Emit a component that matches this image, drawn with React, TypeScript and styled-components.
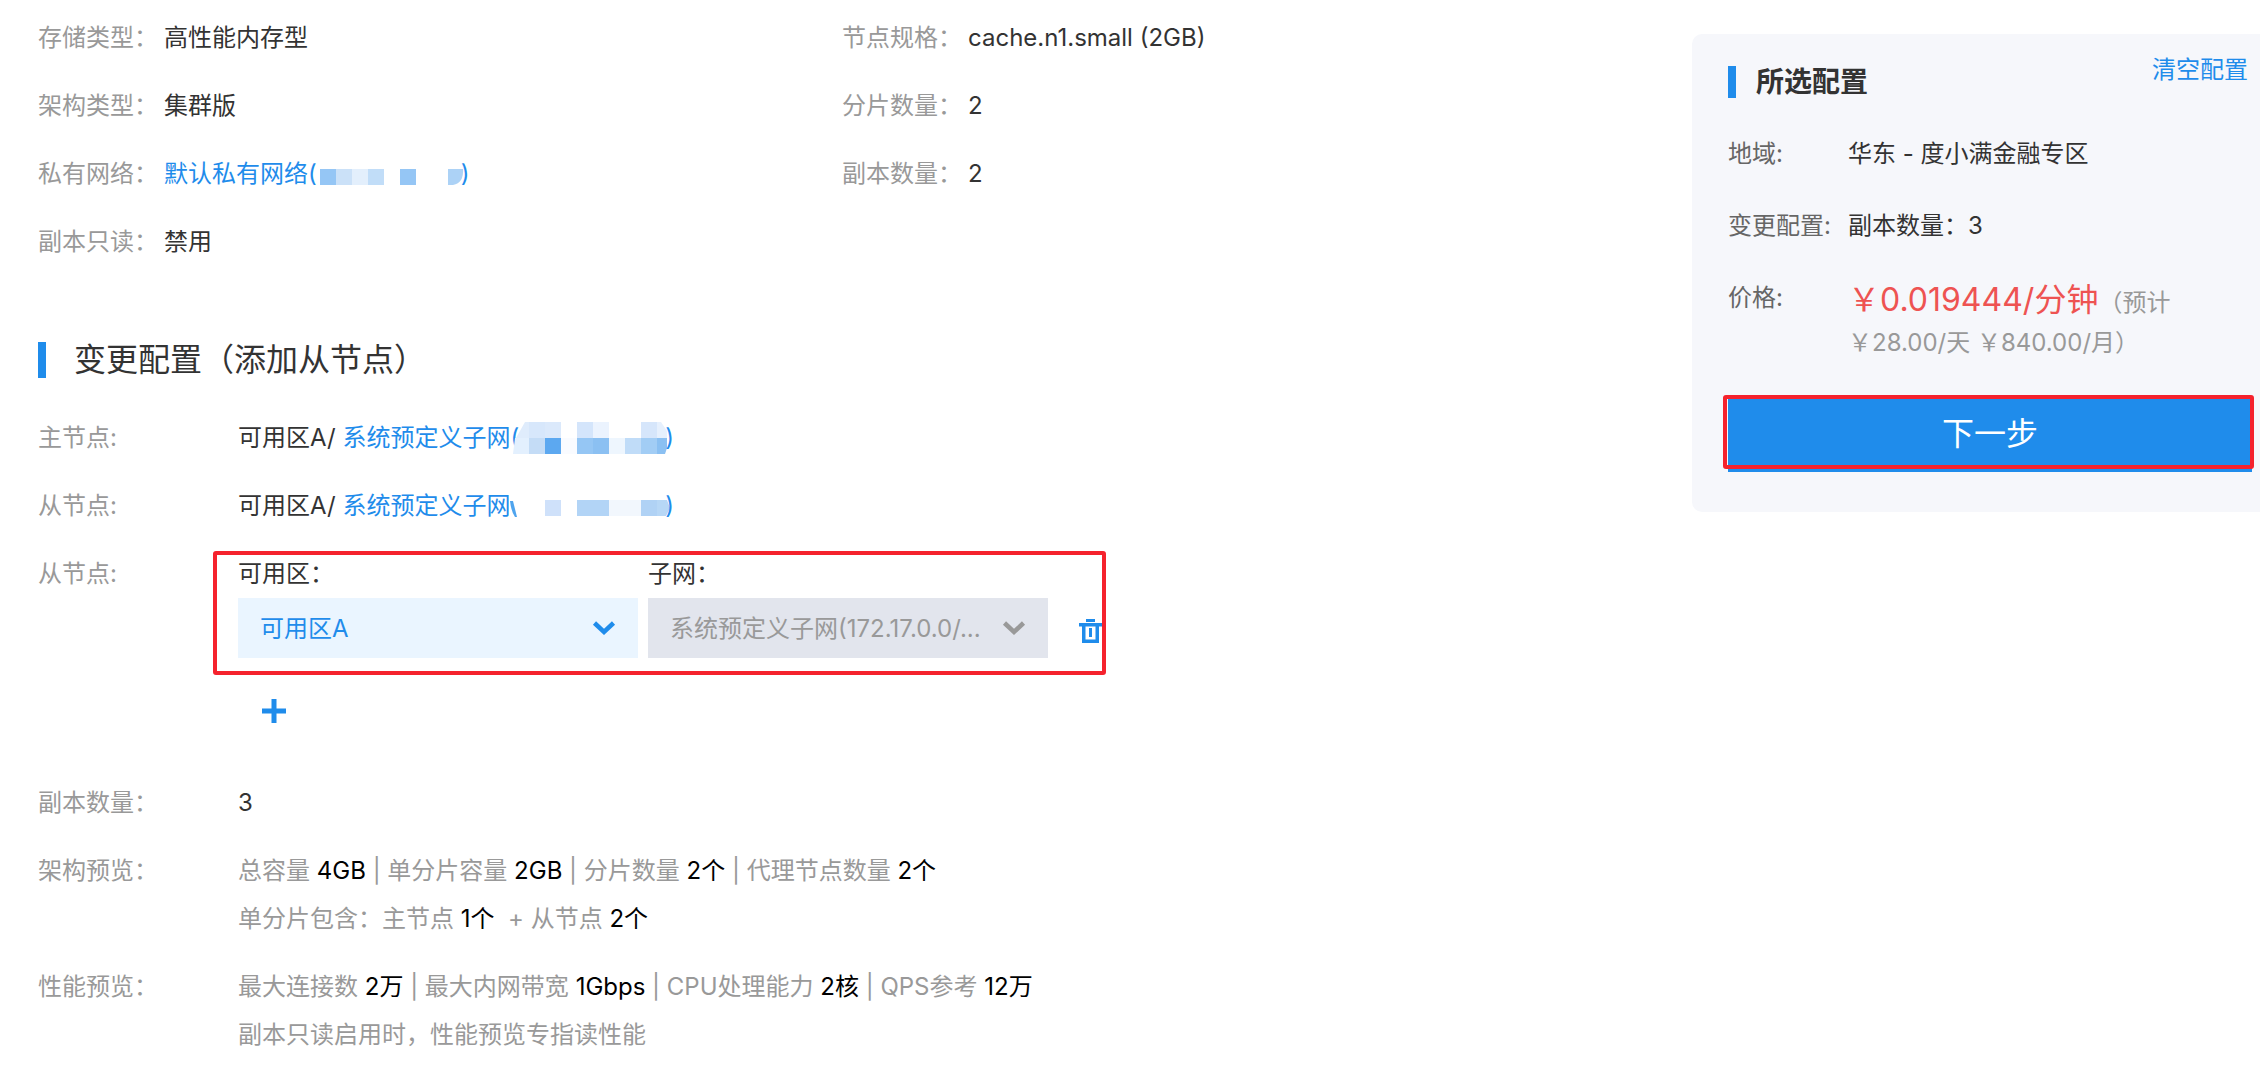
import React from "react";
import styled, { createGlobalStyle } from "styled-components";

const BLUE = "#1f8ceb";

const Global = createGlobalStyle`
  * { box-sizing: border-box; }
  body {
    margin: 0;
    background: #fff;
    color: #333;
    font-family: Inter, "Noto Sans CJK SC", sans-serif;
    font-size: 24px;
    line-height: 36px;
  }
  dl, dd, h2, h3, p { margin: 0; }
  button, select { font: inherit; }
`;

const Page = styled.div`
  display: grid;
  grid-template-columns: minmax(0, 1fr) 568px;
  align-items: start;
`;

const Main = styled.main`
  padding: 20px 0 36px 38px;
`;

const Summary = styled.dl`
  display: grid;
  grid-template-columns: 804px 1fr;
  row-gap: 32px;
`;

const SummaryItem = styled.div<{ $column: number }>`
  display: flex;
  grid-column: ${(p) => p.$column};
  gap: 6px;
`;

const Term = styled.dt`
  color: #999;
`;

const Link = styled.a`
  color: ${BLUE};
  text-decoration: none;
`;

const SectionTitle = styled.h2`
  display: flex;
  align-items: center;
  gap: 28px;
  margin: 80px 0 40px;
  font-size: 32px;
  font-weight: 400;
  line-height: 40px;

  &::before {
    content: "";
    width: 8px;
    height: 36px;
    background: ${BLUE};
  }
`;

const Fields = styled.dl`
  display: grid;
  row-gap: 32px;
`;

const Field = styled.div`
  display: grid;
  grid-template-columns: 200px 1fr;
`;

const NodeEditor = styled.div`
  position: relative;
  display: flex;
  align-items: flex-end;
  width: max-content;
  gap: 10px;
`;

const Picker = styled.div`
  display: flex;
  flex-direction: column;
  width: 400px;
  gap: 6px;
`;

const SelectBox = styled.div`
  display: grid;
  align-items: center;

  > * { grid-area: 1 / 1; }
  > svg { justify-self: end; margin-right: 22px; pointer-events: none; }
`;

const Select = styled.select`
  appearance: none;
  width: 100%;
  height: 60px;
  padding: 2px 64px 0 22px;
  border: 0;
  border-radius: 0;
  background: #eaf5ff;
  color: ${BLUE};
  text-overflow: ellipsis;
  opacity: 1;

  &:disabled {
    background: #e2e5ed;
    color: #999;
  }
`;

const IconButton = styled.button`
  display: flex;
  align-items: center;
  justify-content: center;
  width: 24px;
  height: 60px;
  padding: 0;
  border: 0;
  background: none;
  color: ${BLUE};
`;

const DeleteButton = styled(IconButton)`
  margin-left: 20px;
  padding-top: 6px;
`;

const AddButton = styled(IconButton)`
  margin: 23px 0 12px 24px;
`;

const Highlight = styled.span<{ $inset: string }>`
  position: absolute;
  inset: ${(p) => p.$inset};
  border: 4px solid #f5222d;
  border-radius: 3px;
  pointer-events: none;
`;

const Preview = styled.dd`
  color: #999;

  p + p { margin-top: 12px; }
  b { color: #000; font-weight: 400; }
`;

const Card = styled.aside`
  margin-top: 34px;
  padding: 14px 8px 40px 36px;
  border-radius: 10px 0 0 10px;
  background: #f6f7fb;
`;

const CardHead = styled.header`
  display: flex;
  align-items: flex-start;
  justify-content: space-between;
  padding-right: 4px;
`;

const CardTitle = styled.h3`
  display: flex;
  align-items: center;
  gap: 20px;
  padding-top: 16px;
  font-size: 28px;
  font-weight: 700;
  line-height: 36px;

  &::before {
    content: "";
    width: 8px;
    height: 32px;
    background: ${BLUE};
  }
`;

const ClearButton = styled.button`
  padding: 4px 0 0;
  border: 0;
  background: none;
  color: ${BLUE};
`;

const CardFields = styled.dl`
  display: grid;
  row-gap: 36px;
  margin: 36px 0 33px;
`;

const CardField = styled.div`
  display: grid;
  grid-template-columns: 120px 1fr;

  dt { color: #666; }
`;

const Price = styled.dd`
  color: #999;
  line-height: 40px;

  strong { color: #ee5352; font-size: 32px; font-weight: 400; }
  span { white-space: nowrap; }
`;

const Action = styled.div`
  position: relative;
`;

const NextButton = styled.button`
  display: block;
  width: 100%;
  height: 76px;
  border: 0;
  background: ${BLUE};
  color: #fff;
  font-size: 32px;
`;

const MaskSvg = styled.svg`
  display: inline-block;
  overflow: visible;
  vertical-align: -8px;
`;

type Shape = [path: string, color: string];

const NETWORK_MASK: Shape[] = [
  ["M3 11h16v16H3z", "#95c6f5"],
  ["M19 11h16v16H19z", "#cbe1f8"],
  ["M35 11h16v16H35z", "#e3effc"],
  ["M51 11h16v16H51z", "#c1ddf8"],
  ["M83 11h16v16H83z", "#95c6f5"],
  ["M131 11h15q1 14-10 16h-5z", "#acd2f6"],
];

const PRIMARY_MASK: Shape[] = [
  ["M6 0h4v16H-3z", "#dfecfc"],
  ["M10 0h16v16H10z", "#d7e7fb"],
  ["M26 0h16v16H26z", "#dbe9fb"],
  ["M58 0h16v16H58z", "#d4e5fb"],
  ["M74 0h16v16H74z", "#ebf3fe"],
  ["M122 0h16v16H122z", "#d6e6fb"],
  ["M138 0h4l6 9v7h-10z", "#e6f0fd"],
  ["M-4 16h14v16H-6z", "#e3f0fe"],
  ["M10 16h16v16H10z", "#c4dcf6"],
  ["M26 16h16v16H26z", "#5ca8f0"],
  ["M42 16h16v16H42z", "#f9fbff"],
  ["M58 16h16v16H58z", "#95c6f4"],
  ["M74 16h16v16H74z", "#8bc0f2"],
  ["M90 16h16v16H90z", "#eef6fe"],
  ["M106 16h16v16H106z", "#c0dcf8"],
  ["M122 16h16v16H122z", "#a2cdf5"],
  ["M138 16h10v10l-2 6h-8z", "#8bc0f2"],
];

const REPLICA_MASK: Shape[] = [
  ["M-10 2h14v30H-10z", "#ffffff"],
  ["M-9 11h3l4 16h-2q-4-6-5-16z", "#4fa4ee"],
  ["M26 10h16v16H26z", "#cfe1fa"],
  ["M58 10h32v16H58z", "#b2d4f6"],
  ["M90 10h32v16H90z", "#f2f7fd"],
  ["M122 10h16v16H122z", "#b0d2f5"],
  ["M138 10h10l3 8-4 8h-9z", "#b7d7f6"],
];

function Mask({ shapes, width }: { shapes: Shape[]; width: number }) {
  return (
    <MaskSvg width={width} height="32" aria-hidden="true">
      {shapes.map(([path, color]) => (
        <path key={path} d={path} fill={color} />
      ))}
    </MaskSvg>
  );
}

function Chevron({ color }: { color: string }) {
  return (
    <svg width="24" height="16" viewBox="0 0 24 16" fill="none" aria-hidden="true">
      <path d="M2.500 3 L12 12 L21.500 3" stroke={color} strokeWidth="4.500" />
    </svg>
  );
}

function TrashIcon() {
  return (
    <svg width="24" height="24" viewBox="0 0 24 24" fill="currentColor" aria-hidden="true">
      <path d="M8 0h9v3H8zM1 4h23v3.500H1zM4 7h3.500v13.500h10V7H21v17H4zM11 9h3v9h-3z" />
    </svg>
  );
}

function PlusIcon() {
  return (
    <svg width="24" height="24" viewBox="0 0 24 24" fill="currentColor" aria-hidden="true">
      <path d="M9.500 0h5v9.500H24v5h-9.500V24h-5v-9.500H0v-5h9.500z" />
    </svg>
  );
}

export default function App() {
  return (
    <>
      <Global />
      <Page>
        <Main>
          <Summary>
            <SummaryItem $column={1}><Term>存储类型：</Term><dd>高性能内存型</dd></SummaryItem>
            <SummaryItem $column={2}><Term>节点规格：</Term><dd>cache.n1.small (2GB)</dd></SummaryItem>
            <SummaryItem $column={1}><Term>架构类型：</Term><dd>集群版</dd></SummaryItem>
            <SummaryItem $column={2}><Term>分片数量：</Term><dd>2</dd></SummaryItem>
            <SummaryItem $column={1}>
              <Term>私有网络：</Term>
              <dd><Link href="#network">默认私有网络(<Mask shapes={NETWORK_MASK} width={144} />)</Link></dd>
            </SummaryItem>
            <SummaryItem $column={2}><Term>副本数量：</Term><dd>2</dd></SummaryItem>
            <SummaryItem $column={1}><Term>副本只读：</Term><dd>禁用</dd></SummaryItem>
          </Summary>

          <SectionTitle>变更配置（添加从节点）</SectionTitle>

          <Fields>
            <Field>
              <Term>主节点:</Term>
              <dd>可用区A/ <Link href="#primary">系统预定义子网(<Mask shapes={PRIMARY_MASK} width={146} />)</Link></dd>
            </Field>
            <Field>
              <Term>从节点:</Term>
              <dd>可用区A/ <Link href="#replica">系统预定义子网(<Mask shapes={REPLICA_MASK} width={146} />)</Link></dd>
            </Field>
            <Field>
              <Term>从节点:</Term>
              <dd>
                <NodeEditor>
                  <Picker>
                    <label htmlFor="zone">可用区：</label>
                    <SelectBox>
                      <Select id="zone"><option>可用区A</option></Select>
                      <Chevron color={BLUE} />
                    </SelectBox>
                  </Picker>
                  <Picker>
                    <label htmlFor="subnet">子网：</label>
                    <SelectBox>
                      <Select id="subnet" disabled><option>系统预定义子网(172.17.0.0/...</option></Select>
                      <Chevron color="#999" />
                    </SelectBox>
                  </Picker>
                  <DeleteButton type="button" aria-label="删除"><TrashIcon /></DeleteButton>
                  <Highlight $inset="-5px -4px -17px -25px" />
                </NodeEditor>
                <AddButton type="button" aria-label="添加"><PlusIcon /></AddButton>
              </dd>
            </Field>
            <Field>
              <Term>副本数量：</Term>
              <dd>3</dd>
            </Field>
            <Field>
              <Term>架构预览：</Term>
              <Preview>
                <p>总容量 <b>4GB</b> | 单分片容量 <b>2GB</b> | 分片数量 <b>2个</b> | 代理节点数量 <b>2个</b></p>
                <p>单分片包含：主节点 <b>1个</b>&nbsp; + 从节点 <b>2个</b></p>
              </Preview>
            </Field>
            <Field>
              <Term>性能预览：</Term>
              <Preview>
                <p>最大连接数 <b>2万</b> | 最大内网带宽 <b>1Gbps</b> | CPU处理能力 <b>2核</b> | QPS参考 <b>12万</b></p>
                <p>副本只读启用时，性能预览专指读性能</p>
              </Preview>
            </Field>
          </Fields>
        </Main>

        <Card>
          <CardHead>
            <CardTitle>所选配置</CardTitle>
            <ClearButton type="button">清空配置</ClearButton>
          </CardHead>
          <CardFields>
            <CardField><dt>地域:</dt><dd>华东 - 度小满金融专区</dd></CardField>
            <CardField><dt>变更配置:</dt><dd>副本数量：3</dd></CardField>
            <CardField>
              <dt>价格:</dt>
              <Price>
                <strong>￥0.019444/分钟</strong>（预计<wbr /><span>￥28.00/天 ￥840.00/月）</span>
              </Price>
            </CardField>
          </CardFields>
          <Action>
            <NextButton type="button">下一步</NextButton>
            <Highlight $inset="-1px -2px 3px -5px" />
          </Action>
        </Card>
      </Page>
    </>
  );
}
